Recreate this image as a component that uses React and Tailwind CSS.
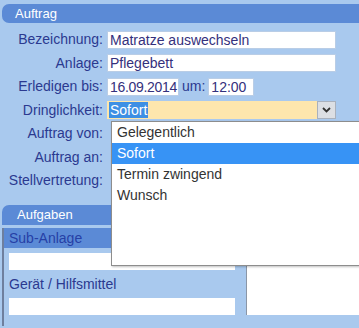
import React from "react";

function Row({ label, children }) {
  return (
    <div className="flex items-center h-[23.5px]">
      <div className="w-[107px] shrink-0 text-right pr-[4px] text-[#2b3990]">{label}</div>
      {children}
    </div>
  );
}

function Field({ value, w = "w-[229px]", extra = "" }) {
  return (
    <div className={`${w} ${extra} shrink-0 h-[18px] bg-white leading-[16px] pl-[2px] text-[#34307c] border border-[#b9cde6] whitespace-nowrap overflow-hidden`}>
      {value}
    </div>
  );
}

export default function App() {
  return (
    <div
      className="relative w-[359px] h-[328px] overflow-hidden bg-[#a9c9ee] text-[14px]"
      style={{ fontFamily: '"Liberation Sans", Arial, sans-serif' }}
    >
      <div className="pt-[4px] pl-[2px]">
        <div className="h-[19px] rounded-l-[7px] bg-[#5b8ad6] text-white text-[13px] leading-[19px] pl-[13px]">
          Auftrag
        </div>
      </div>

      <div className="pt-[5px]">
        <Row label="Bezeichnung:">
          <Field value="Matratze auswechseln" />
        </Row>
        <Row label="Anlage:">
          <Field value="Pflegebett" />
        </Row>
        <Row label="Erledigen bis:">
          <Field value="16.09.2014" w="w-[72px]" extra="tracking-[-0.3px]" />
          <span className="ml-[3px] mr-[3px] text-[#2b3990]">um:</span>
          <Field value="12:00" w="w-[46px]" />
        </Row>
        <Row label="Dringlichkeit:">
          <div className="flex w-[229px] h-[18px]">
            <div className="flex-1 bg-[#fde6ad] leading-[18px] pl-[2px]">
              <span className="bg-[#3d8fe4] text-white px-[1px]">Sofort</span>
            </div>
            <div className="w-[19px] bg-[#dcdfe4] border border-[#a9b1bd] flex items-center justify-center">
              <svg width="9" height="6" viewBox="0 0 9 6">
                <path d="M1 1 L4.5 4.5 L8 1" stroke="#333" strokeWidth="1.8" fill="none" />
              </svg>
            </div>
          </div>
        </Row>
        <Row label="Auftrag von:" />
        <Row label="Auftrag an:" />
        <Row label="Stellvertretung:" />
      </div>

      <div className="pt-[12px] pl-[2px]">
        <div className="h-[20px] rounded-tl-[7px] bg-[#5b8ad6] text-white text-[13px] leading-[20px] pl-[15px]">
          Aufgaben
        </div>
        <div className="border-l-[2px] border-[#6e7f9e] mt-[3px] flex gap-[6px] pb-[11px]">
          <div className="w-[236px]">
            <div className="h-[20px] bg-[#5b8ad6] text-[#2640a6] leading-[20px] pl-[5px]">Sub-Anlage</div>
            <div className="px-[5px] pt-[5px]">
              <div className="h-[17px] bg-white" />
              <div className="h-[28px] leading-[28px] text-[#2b3990]">Gerät / Hilfsmittel</div>
              <div className="h-[17px] bg-white" />
            </div>
          </div>
          <div className="flex-1 bg-white border-l border-[#8b96a6]" />
        </div>
      </div>

      <div className="absolute left-[111px] top-[121px] w-[260px] h-[145px] bg-white border border-[#8d8d8d] shadow-[1px_1px_2px_rgba(0,0,0,0.25)] text-[#333]">
        <div className="h-[21px] leading-[21px] pl-[5px]">Gelegentlich</div>
        <div className="h-[21px] leading-[21px] pl-[5px] bg-[#3793f5] text-white">Sofort</div>
        <div className="h-[21px] leading-[21px] pl-[5px]">Termin zwingend</div>
        <div className="h-[21px] leading-[21px] pl-[5px]">Wunsch</div>
      </div>
    </div>
  );
}
